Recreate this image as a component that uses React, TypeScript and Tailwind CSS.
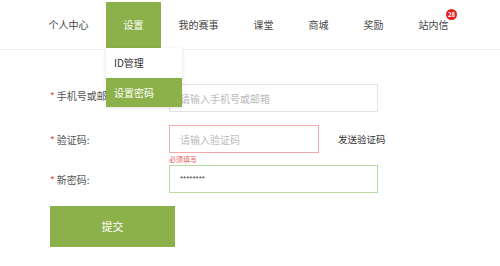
const navItems = ['个人中心', '设置', '我的赛事', '课堂', '商城', '奖励', '站内信']

export default function App() {
  return (
    <div className="w-[500px] h-[266px] bg-white overflow-hidden text-[#333] font-['Noto_Sans_CJK_SC','Noto_Sans',sans-serif]">
      {/* top nav */}
      <div className="h-[50px] border-b border-[#eeeeee] pt-[2px] pl-[31px] flex">
        {navItems.map((item) => {
          const active = item === '设置'
          return (
            <div
              key={item}
              className={`relative h-[46px] px-[17.5px] flex items-center text-[10px] leading-none ${
                active ? 'bg-[#8cb14a] text-white' : 'text-[#444]'
              }`}
            >
              {item}
              {item === '站内信' && (
                <span className="absolute top-[7px] right-[9px] w-[11px] h-[11px] rounded-full bg-[#e61e1e] text-white text-[6px] font-bold flex items-center justify-center">
                  28
                </span>
              )}
              {active && (
                <div className="absolute left-0 top-[46px] w-[76px] bg-white shadow-[0_1px_4px_rgba(0,0,0,0.12)] z-10 text-[10px]">
                  <div className="h-[30px] flex items-center pl-[8px] text-[#333]">ID管理</div>
                  <div className="h-[29px] flex items-center pl-[8px] bg-[#8cb14a] text-white">设置密码</div>
                </div>
              )}
            </div>
          )
        })}
      </div>

      {/* form */}
      <div className="pl-[50px] pt-[34px] flex flex-col text-[10px]">
        <div className="flex items-center h-[28px]">
          <div className="w-[119px] -mt-[5px]">
            <div className="w-[56px] overflow-hidden whitespace-nowrap text-[#555]">
              <span className="text-[#e03a3a] mr-[2px]">*</span>手机号或邮箱:
            </div>
          </div>
          <div className="w-[209px] h-[28px] border border-[#e3e3e3] flex items-center pl-[10px] text-[#bbbbbb]">
            请输入手机号或邮箱
          </div>
        </div>

        <div className="flex items-center h-[28px] mt-[13px]">
          <div className="w-[119px] flex items-center text-[#555]">
            <span className="text-[#e03a3a] mr-[2px]">*</span>验证码:
          </div>
          <div className="w-[150px] h-[28px] border border-[#f3a9a9] flex items-center pl-[10px] text-[#bbbbbb]">
            请输入验证码
          </div>
          <div className="ml-[19px] text-[#333] text-[9.5px]">发送验证码</div>
        </div>
        <div className="pl-[119px] h-[12px] text-[7px] text-[#e85555] leading-[12px]">必须填写</div>

        <div className="flex items-center h-[28px]">
          <div className="w-[119px] flex items-center text-[#555]">
            <span className="text-[#e03a3a] mr-[2px]">*</span>新密码:
          </div>
          <div className="w-[209px] h-[28px] border border-[#b9dca3] flex items-center pl-[10px] text-[#444] text-[8px] font-['Liberation_Sans',sans-serif]">
            ********
          </div>
        </div>

        <button className="mt-[13px] w-[125px] h-[41px] bg-[#8cb14a] text-white text-[11px]">提交</button>
      </div>
    </div>
  )
}
